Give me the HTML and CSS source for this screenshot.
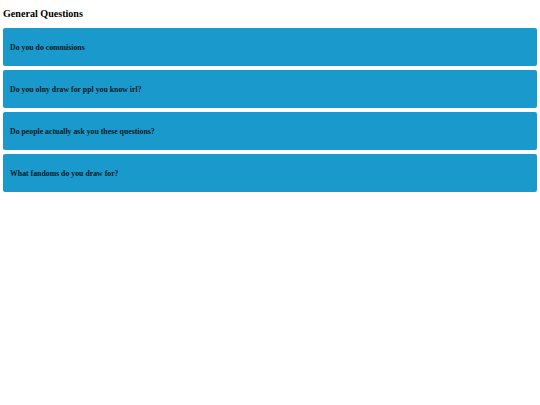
FILE: index.html
```html
<!DOCTYPE html>
<html>
<head>
<meta charset="utf-8">
<link rel="stylesheet" href="styles.css">
</head>
<body>
<div class="page">
  <h2 class="title">General Questions</h2>
  <div class="faq">
    <div class="item">Do you do commisions</div>
    <div class="item">Do you olny draw for ppl you know irl?</div>
    <div class="item">Do people actually ask you these questions?</div>
    <div class="item">What fandoms do you draw for?</div>
  </div>
</div>
</body>
</html>
```
FILE: styles.css
```css
html, body {
  margin: 0;
  padding: 0;
  background: #ffffff;
}
.page {
  padding: 0 3px;
  font-family: "Liberation Serif", "Times New Roman", serif;
  color: #000;
}
.title {
  margin: 0;
  padding-top: 7px;
  height: 21px;
  font-size: 10.1px;
  line-height: 13px;
  font-weight: bold;
}
.faq {
  display: flex;
  flex-direction: column;
  gap: 4px;
}
.item {
  height: 38px;
  box-sizing: border-box;
  display: flex;
  align-items: center;
  padding: 0 7px;
  background: #1999cc;
  border-radius: 2px;
  font-size: 7.8px;
  font-weight: bold;
  color: #0a1a24;
}
```
